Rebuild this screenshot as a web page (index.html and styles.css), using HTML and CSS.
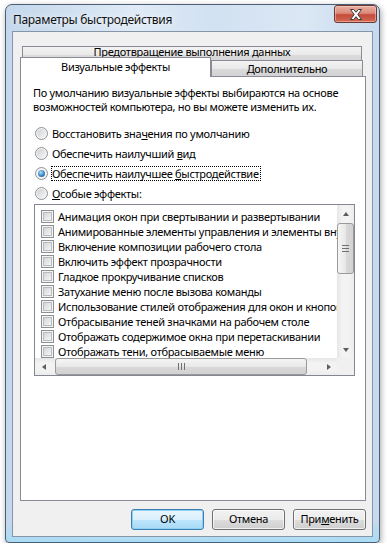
FILE: index.html
```html
<!DOCTYPE html>
<html lang="ru">
<head>
  <meta charset="UTF-8">
  <title>Параметры быстродействия</title>
  <link rel="stylesheet" href="styles.css">
</head>
<body>

  <div class="window">
    <div class="titlebar">
      <span class="title">Параметры быстродействия</span>
      <div class="close">
        <svg width="14" height="11" viewBox="0 0 14 11">
          <path d="M1.5 0.5h3.2L7 3.3 9.3 0.5h3.2L8.8 5.5l3.7 5h-3.2L7 7.7 4.7 10.5H1.5l3.7-5z" fill="#fff" stroke="#3c3c3c" stroke-width="1"/>
        </svg>
      </div>
    </div>

    <div class="client">
      <div class="tab-row back">
        <div class="tab">Предотвращение выполнения данных</div>
      </div>
      <div class="tab-row front">
        <div class="tab selected">Визуальные эффекты</div>
        <div class="tab">Дополнительно</div>
      </div>

      <div class="panel">
        <p class="intro">По умолчанию визуальные эффекты выбираются на основе<br>возможностей компьютера, но вы можете изменить их.</p>

        <div class="options">
          <div class="option"><span class="radio"></span><span>Восстановить зна<u>ч</u>ения по умолчанию</span></div>
          <div class="option"><span class="radio"></span><span>Обеспечить наилучший <u>в</u>ид</span></div>
          <div class="option"><span class="radio on"></span><span class="focus">Обеспечить наилучшее <u>б</u>ыстродействие</span></div>
          <div class="option"><span class="radio"></span><span><u>О</u>собые эффекты:</span></div>
        </div>

        <div class="listbox">
          <div class="items">
            <div class="item"><span class="check"></span>Анимация окон при свертывании и развертывании</div>
            <div class="item"><span class="check"></span>Анимированные элементы управления и элементы внутри окна</div>
            <div class="item"><span class="check"></span>Включение композиции рабочего стола</div>
            <div class="item"><span class="check"></span>Включить эффект прозрачности</div>
            <div class="item"><span class="check"></span>Гладкое прокручивание списков</div>
            <div class="item"><span class="check"></span>Затухание меню после вызова команды</div>
            <div class="item"><span class="check"></span>Использование стилей отображения для окон и кнопок</div>
            <div class="item"><span class="check"></span>Отбрасывание теней значками на рабочем столе</div>
            <div class="item"><span class="check"></span>Отображать содержимое окна при перетаскивании</div>
            <div class="item"><span class="check"></span>Отображать тени, отбрасываемые меню</div>
            <div class="item"><span class="check"></span>Отображать эскизы вместо значков</div>
          </div>

          <div class="vscroll">
            <span class="arrow up"></span>
            <div class="track">
              <div class="thumb"><span class="grip"></span></div>
            </div>
            <span class="arrow down"></span>
          </div>

          <div class="hscroll">
            <span class="arrow left"></span>
            <div class="track">
              <div class="thumb"><span class="grip"></span></div>
            </div>
            <span class="arrow right"></span>
          </div>

          <div class="corner"></div>
        </div>
      </div>

      <div class="buttons">
        <div class="btn default">OK</div>
        <div class="btn">Отмена</div>
        <div class="btn">При<u>м</u>енить</div>
      </div>
    </div>
  </div>

</body>
</html>
```

FILE: styles.css
```css
body {
  margin: 0;
  background: #fff;
  font-family: "Segoe UI", "Noto Sans", sans-serif;
  font-size: 11px;
  letter-spacing: -0.3px;
  color: #000;
}

.window {
  box-sizing: border-box;
  width: 375px;
  height: 539px;
  margin: 4px 0 0 5px;
  padding: 0 6px 5px;
  display: flex;
  flex-direction: column;
  border: 1px solid #4b5e76;
  border-radius: 7px 7px 4px 4px;
  background:
    linear-gradient(to bottom, rgba(255,255,255,0) 96%, #a9dcf4 100%),
    linear-gradient(to right, #c4d7ec, #dfeaf6 35%, #d2e1f1 55%, #dbe7f4 80%, #c6d9ee);
  box-shadow: 1px 2px 6px rgba(0, 0, 0, 0.35);
}

.titlebar {
  height: 26px;
  display: flex;
  justify-content: space-between;
  align-items: flex-start;
}

.title {
  padding: 6px 0 0 1px;
  font-size: 12px;
  color: #111;
  text-shadow: 0 0 6px #fff;
}

.close {
  width: 43px;
  height: 18px;
  margin-right: -4px;
  box-sizing: border-box;
  border: 1px solid #6b3a35;
  border-radius: 3px;
  background: linear-gradient(to bottom, #eab0a3, #dc8a79 45%, #c54b3c 55%, #d26a52);
  box-shadow: inset 0 0 0 1px rgba(255, 220, 210, 0.45);
  display: flex;
  align-items: center;
  justify-content: center;
}

.client {
  flex: 1;
  border: 1px solid #8594a6;
  background: #f0f0f0;
  padding: 14px 6px 0 7px;
  display: flex;
  flex-direction: column;
}

/* tabs */
.tab-row {
  display: flex;
}

.tab {
  box-sizing: border-box;
  border: 1px solid #898c95;
  border-bottom: none;
  background: linear-gradient(to bottom, #f3f3f3, #e9e9e9 50%, #dbdbdb 51%, #d3d3d3);
  text-align: center;
}

.back {
  margin: 0 4px 0 2px;
}

.back .tab {
  flex: 1;
  height: 17px;
  line-height: 10px;
}

.front {
  height: 20px;
  margin-top: -6px;
  align-items: flex-end;
}

.front .tab {
  height: 16px;
  width: 152px;
  margin-bottom: 1px;
  line-height: 16px;
}

.front .tab.selected {
  width: 191px;
  height: 20px;
  margin-bottom: 0;
  background: #fff;
  line-height: 18px;
  position: relative;
  z-index: 1;
}

.panel {
  box-sizing: border-box;
  height: 425px;
  margin-top: -1px;
  padding: 9px 12px 0;
  border: 1px solid #898c95;
  background: #fff;
}

.intro {
  margin: 0;
  line-height: 14px;
}

.options {
  margin-top: 9px;
}

.option {
  height: 20px;
  display: flex;
  align-items: center;
  gap: 4px;
  margin-left: 2px;
}

.focus {
  outline: 1px dotted #000;
  padding: 0 1px 0 0;
  line-height: 13px;
}

.radio {
  box-sizing: border-box;
  width: 13px;
  height: 13px;
  border: 1px solid #8f9295;
  border-radius: 50%;
  background: #f4f4f4;
  position: relative;
  flex: none;
}

.radio::after {
  content: "";
  position: absolute;
  inset: 1px;
  border-radius: 50%;
  background: linear-gradient(135deg, #cfd1d4, #f6f6f6);
}

.radio.on::after {
  inset: 2px;
  background: radial-gradient(circle at 40% 35%, #aee0fa, #3a85c6 55%, #1d4f8c);
}

/* list of effects */
.listbox {
  box-sizing: border-box;
  width: 321px;
  height: 172px;
  margin: 1px 0 0 1px;
  border: 1px solid #828790;
  display: grid;
  grid-template-columns: 1fr 17px;
  grid-template-rows: 1fr 17px;
}

.items {
  overflow: hidden;
  padding: 4px 0 0 6px;
}

.item {
  height: 15px;
  display: flex;
  align-items: center;
  gap: 4px;
  white-space: nowrap;
}

.check {
  box-sizing: border-box;
  width: 13px;
  height: 13px;
  border: 1px solid #8e8f8f;
  background: #f4f4f4;
  position: relative;
  flex: none;
}

.check::after {
  content: "";
  position: absolute;
  inset: 1px;
  border: 1px solid #b8bbc0;
  background: linear-gradient(135deg, #d3d6da, #f5f5f5);
}

.vscroll {
  display: flex;
  flex-direction: column;
  background: linear-gradient(to right, #e6e6e6, #f3f3f3 30%, #f3f3f3 70%, #ececec);
}

.hscroll {
  display: flex;
  background: linear-gradient(to bottom, #e6e6e6, #f3f3f3 30%, #f3f3f3 70%, #ececec);
}

.corner {
  background: #f0f0f0;
}

.arrow {
  width: 17px;
  height: 17px;
  flex: none;
  position: relative;
}

.arrow::after {
  content: "";
  position: absolute;
  left: 50%;
  top: 50%;
  width: 0;
  height: 0;
  border: 3.5px solid transparent;
}

.arrow.up::after {
  border-bottom: 4px solid #5e5e5e;
  border-top: none;
  transform: translate(-50%, -50%);
}

.arrow.down::after {
  border-top: 4px solid #5e5e5e;
  border-bottom: none;
  transform: translate(-50%, -50%);
}

.arrow.left::after {
  border-right: 4px solid #5e5e5e;
  border-left: none;
  transform: translate(-50%, -50%);
}

.arrow.right::after {
  border-left: 4px solid #5e5e5e;
  border-right: none;
  transform: translate(-50%, -50%);
}

.track {
  flex: 1;
  display: flex;
}

.vscroll .track {
  flex-direction: column;
}

.thumb {
  box-sizing: border-box;
  border: 1px solid #9a9a9a;
  border-radius: 3px;
  display: flex;
  align-items: center;
  justify-content: center;
}

.vscroll .thumb {
  height: 51px;
  margin: 1px 0 0;
  background: linear-gradient(to right, #f5f5f5, #e8e8e8 50%, #d9d9d9 51%, #d2d2d2);
}

.hscroll .thumb {
  width: 252px;
  margin-left: 3px;
  background: linear-gradient(to bottom, #f5f5f5, #e8e8e8 50%, #d9d9d9 51%, #d2d2d2);
}

.grip {
  width: 7px;
  height: 7px;
}

.vscroll .grip {
  background: repeating-linear-gradient(to bottom, #6f6f6f 0 1px, transparent 1px 3px);
}

.hscroll .grip {
  background: repeating-linear-gradient(to right, #6f6f6f 0 1px, transparent 1px 3px);
}

/* dialog buttons */
.buttons {
  display: flex;
  justify-content: flex-end;
  gap: 8px;
  margin-top: 8px;
}

.btn {
  box-sizing: border-box;
  width: 73px;
  height: 21px;
  border: 1px solid #707070;
  border-radius: 3px;
  background: linear-gradient(to bottom, #f2f2f2, #ebebeb 50%, #dddddd 51%, #cfcfcf);
  box-shadow: inset 0 0 0 1px rgba(255, 255, 255, 0.7);
  text-align: center;
  line-height: 18px;
}

.btn.default {
  border-color: #3c7fb1;
  background: linear-gradient(to bottom, #eaf6fd, #d9f0fc 50%, #bee6fd 51%, #a7d9f5);
  box-shadow: inset 0 0 0 1px #8ecff2;
}
```
